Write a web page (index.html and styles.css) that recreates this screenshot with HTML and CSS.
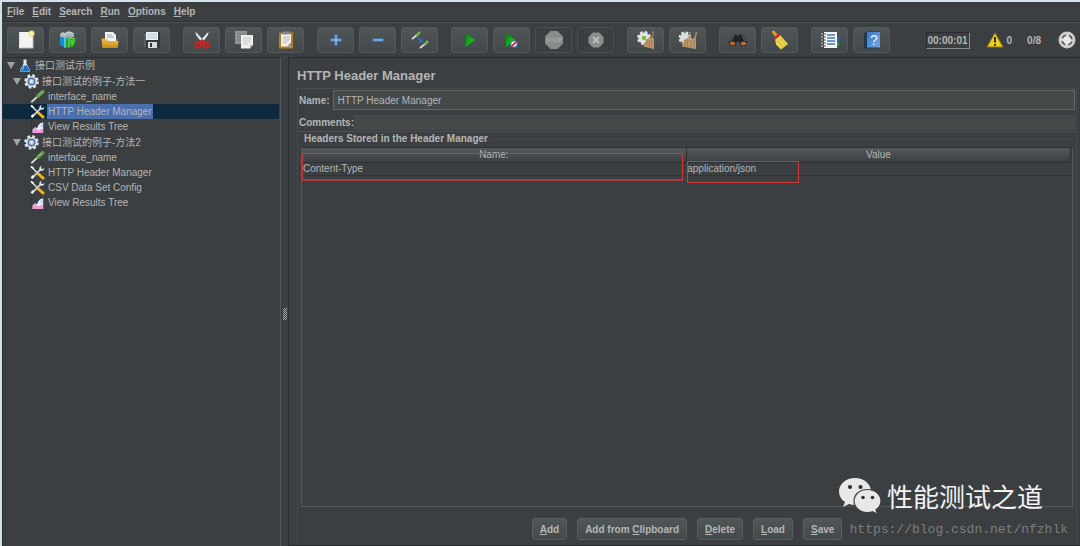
FILE: index.html
```html
<!DOCTYPE html>
<html lang="zh-CN">
<head>
<meta charset="utf-8">
<title>HTTP Header Manager</title>
<link rel="stylesheet" href="styles.css">
</head>
<body>
<svg class="defs" aria-hidden="true">
  <defs>
    <linearGradient id="g-green" x1="0" y1="0" x2="1" y2="1"><stop offset="0" stop-color="#0b7a10"/><stop offset=".6" stop-color="#12b81a"/><stop offset="1" stop-color="#0a8a10"/></linearGradient>
    <linearGradient id="g-gold" x1="0" y1="0" x2="0" y2="1"><stop offset="0" stop-color="#f0bd50"/><stop offset="1" stop-color="#c88a18"/></linearGradient>
    <linearGradient id="g-book" x1="0" y1="0" x2="1" y2="1"><stop offset="0" stop-color="#3b78c8"/><stop offset="1" stop-color="#6fa6e6"/></linearGradient>
    <radialGradient id="g-ball"><stop offset="0" stop-color="#ffffff"/><stop offset="1" stop-color="#c4c4c4"/></radialGradient>
  </defs>
  <symbol id="flask" viewBox="0 0 12 14"><path d="M4.500 1h3v4L11 12q.3 1.300-1 1.300H2Q.7 13.300 1 12l3.500-7z" fill="#dfe9f2"/><path d="M4 7h4l2.500 5q.3 1-.7 1H2.200q-1 0-.7-1z" fill="#1d6fc4"/><path d="M5 7.500L3.500 11.500" stroke="#8cc3f4" stroke-width="1"/></symbol>
  <symbol id="gear" viewBox="0 0 16 16"><circle cx="8" cy="8" r="6.500" fill="none" stroke="#e6e9ec" stroke-width="2.600" stroke-dasharray="2.800 2.305"/><circle cx="8" cy="8" r="6" fill="#dfe3e8"/><circle cx="8" cy="8" r="4.200" fill="#46678f"/><circle cx="8" cy="8" r="3" fill="#9dbadb"/><circle cx="8" cy="8" r="1.500" fill="#e8eff7"/></symbol>
  <symbol id="dropper" viewBox="0 0 16 14"><path d="M1.500 13L9 6" stroke="#ececec" stroke-width="2"/><path d="M2 13.400L9.600 6.600" stroke="#8d8d8d" stroke-width=".7"/><path d="M8.500 6.500L13.500 2" stroke="#5f9a48" stroke-width="4" stroke-linecap="round"/><path d="M9 5.500L13 2" stroke="#a5cf8e" stroke-width="1"/></symbol>
  <symbol id="tools" viewBox="0 0 16 15"><path d="M2 2l6 6" stroke="#e2e2e2" stroke-width="1.600"/><path d="M1 1l2.500 2" stroke="#f2f2f2" stroke-width="2"/><path d="M8.500 8.500L14 13.500" stroke="#f0b41c" stroke-width="3" stroke-linecap="round"/><path d="M2 13.500L11 4.500" stroke="#c8ccd0" stroke-width="2"/><path d="M1.500 13.500L4 11" stroke="#f5f5f5" stroke-width="2.400"/><path d="M11.500 .8q-2.500 1.700-1 4.200 2.600 1.800 4.500-.7l.2-1.500-2 1.200-1.700-1.200 1-2.200z" fill="#e4e7ea"/></symbol>
  <symbol id="chart" viewBox="0 0 16 15"><path d="M1.500 0v14" stroke="#2c3033" stroke-width="1" stroke-dasharray="2 1"/><path d="M7 14q0-10 7-11v11z" fill="#e4efff"/><path d="M10.500 8q1-3 3.500-4v4z" fill="#b9d3f4"/><path d="M2.500 14.500v-3L5.500 8.500l3 2.500L14 9v5.500z" fill="#ee9ad8"/><path d="M2.500 11.500l3-3 3 2.500L14 9" stroke="#fff" stroke-width=".8" fill="none"/></symbol>
  <symbol id="i-new" viewBox="0 0 20 20"><path d="M3 2h14v16H3z" fill="#f3f3f1"/><path d="M3 18h14M17 4v14" stroke="#c4c4c0"/><path d="M3 4h1M3 7h1M3 10h1M3 13h1" stroke="#aaa"/><circle cx="15.500" cy="3.500" r="3" fill="#efe27a"/><circle cx="15.500" cy="3.500" r="1.300" fill="#fffbd0"/></symbol>
  <symbol id="i-templates" viewBox="0 0 20 20"><path d="M2 4l3-2 3 1 3-2 5 2v4l-6 2-8-2z" fill="#a9b4b6"/><path d="M3 3l4 2 2-3 5 1" stroke="#d7dfe0" fill="none"/><path d="M2 7l4 1v9l-4-2z" fill="#168cc6"/><path d="M6 8l4-2v11l-4 1z" fill="#4fc0ee"/><path d="M8 9l3-2 7 2-2 7-5 2-3-1z" fill="#20a51d"/><path d="M11 8v9M11 8l6 1" stroke="#82e276" fill="none"/><path d="M12 10l5 .5-3 6z" fill="#4fd13e"/></symbol>
  <symbol id="i-open" viewBox="0 0 20 20"><path d="M2 8h5l1 1h10v8H2z" fill="#a9700f"/><path d="M5 2h8l3 3v7H5z" fill="#f2f2f2"/><path d="M7 5h5M7 7h7" stroke="#a6a6a6"/><path d="M1.500 9h5l1.500 2h10.500l-1 7h-15z" fill="url(#g-gold)"/></symbol>
  <symbol id="i-save" viewBox="0 0 20 20"><path d="M2 2h16v16H4l-2-2z" fill="#343a40"/><path d="M4 2h12v8H4z" fill="#edf3f7"/><path d="M5 4h10M5 6h10M5 8h10" stroke="#b5c9d8"/><path d="M6 12h9v6H6z" fill="#dcdcdc"/><path d="M8 13h2v4H8z" fill="#333"/><path d="M3 3v14" stroke="#7a838c"/></symbol>
  <symbol id="i-cut" viewBox="0 0 20 20"><path d="M3.500 1.500L12 11l-2 2L4 5zM16.500 1.500L8 11l2 2L16 5z" fill="#e6e9e9"/><path d="M6 13l4-2 4 2" stroke="#e01a1a" stroke-width="2.400" fill="none"/><circle cx="6" cy="15" r="2.500" fill="none" stroke="#e01a1a" stroke-width="2"/><circle cx="14" cy="15" r="2.500" fill="none" stroke="#e01a1a" stroke-width="2"/></symbol>
  <symbol id="i-copy" viewBox="0 0 20 20"><path d="M1 1h12v13H1z" fill="#8f9595"/><path d="M3 4h8M3 7h5M3 10h4" stroke="#757b7b"/><path d="M7 5h12v10l-3 3.500H7z" fill="#efefee"/><path d="M9 8h8M9 10h8M9 12h8M9 14h5" stroke="#c9c9c9"/><path d="M16 18.500V15h3z" fill="#a6a6a6"/></symbol>
  <symbol id="i-paste" viewBox="0 0 20 20"><path d="M3 2.500h14v16H3z" fill="#bd7b18"/><path d="M5 4h10v12.500H5z" fill="#f3f3f1"/><path d="M6 1.500h8v3H6z" fill="#858a8c"/><path d="M7 7h7M7 9h7M7 11h6M7 13h4" stroke="#b8b8b8"/><path d="M11 16.500L15 12v4.500z" fill="#9b9b9b"/></symbol>
  <symbol id="i-plus" viewBox="0 0 20 20"><path d="M10 4.500v11M4.500 10h11" stroke="#4a83cc" stroke-width="3"/><path d="M10 5v10M5 10h10" stroke="#9cc5f3"/></symbol>
  <symbol id="i-minus" viewBox="0 0 20 20"><path d="M4.500 10h11" stroke="#4a83cc" stroke-width="3"/><path d="M5 10h10" stroke="#9cc5f3"/></symbol>
  <symbol id="i-toggle" viewBox="0 0 20 20"><path d="M2 9l5-4M10 18l5-4" stroke="#dadada" stroke-width="1.700"/><path d="M6.500 5.500L10 2M14.500 14.500L18 11" stroke="#72b052" stroke-width="2.600"/><path d="M7.500 7.500l4 3.500" stroke="#2d73e0" stroke-width="1.600"/><path d="M12.500 8.500v4H8.500z" fill="#2d73e0"/></symbol>
  <symbol id="i-play" viewBox="0 0 20 20"><path d="M5.500 3l9.500 7-9.500 7z" fill="url(#g-green)"/></symbol>
  <symbol id="i-playnow" viewBox="0 0 20 20"><path d="M4 3l9 7-9 7z" fill="url(#g-green)"/><circle cx="12" cy="14" r="3.300" fill="#e8eefa" stroke="#3b6fc0"/><path d="M9.800 16.200l4.400-4.400" stroke="#d83030" stroke-width="1.800"/></symbol>
  <symbol id="i-shutdown" viewBox="0 0 20 20"><path d="M7 2.500h6L17.500 7v6L13 17.500H7L2.500 13V7z" fill="#8b8c8c"/><path d="M7 7l6 6M13 7l-6 6" stroke="#bbbcbc" stroke-width="2"/></symbol>
  <symbol id="i-clear" viewBox="0 0 20 20"><circle cx="8" cy="8" r="5.500" fill="none" stroke="#e3e5e5" stroke-width="3" stroke-dasharray="2.500 1.820"/><circle cx="8" cy="8" r="5.500" fill="#e3e5e5"/><circle cx="8" cy="8" r="2.200" fill="#79bd35"/><path d="M17.500 1l-1.500 8" stroke="#a1764a" stroke-width="1.500"/><path d="M10 9.500l4-2 4 1V19L7.500 16.500z" fill="#c0976a"/><path d="M12 10l-2 6M14 10l-1 7M16 10v8" stroke="#987046" stroke-width=".7"/></symbol>
  <symbol id="i-clearall" viewBox="0 0 20 20"><circle cx="7" cy="8" r="5" fill="none" stroke="#e3e5e5" stroke-width="3" stroke-dasharray="2.300 1.630"/><circle cx="7" cy="8" r="5" fill="#d8dddd"/><path d="M12 2l-1 8M18.500 2l-2 8" stroke="#b08a5e" stroke-width="1.500"/><path d="M6 10l4-2.500 3 2 4-2 1 2V19L4 16.500z" fill="#c0976a"/><path d="M8 10l-2 6M10 10l-1 7M13 10v8M16 10v8" stroke="#987046" stroke-width=".7"/></symbol>
  <symbol id="i-find" viewBox="0 0 20 20"><path d="M5 4.500h3.500l1.500 2 1.500-2H15l4 8-1 3.500h-5l-2-4.500H9L7 16H2l-1-3.500z" fill="#202325"/><path d="M6 5L3 11M14 5l3 6" stroke="#6a7175"/><ellipse cx="4.500" cy="13.500" rx="2.700" ry="2" fill="#b66b35"/><ellipse cx="15.500" cy="13.500" rx="2.700" ry="2" fill="#b66b35"/></symbol>
  <symbol id="i-broom" viewBox="0 0 20 20"><path d="M3.500 2l3.500 4.500" stroke="#d99d35" stroke-width="3" stroke-linecap="round"/><path d="M5 9l5-4 8 9-7 5.500-5-5z" fill="#ead64e"/><path d="M4.500 8.500l5-4" stroke="#cf2a20" stroke-width="2.500"/><path d="M8 10l5 7M10 8l6 7" stroke="#c9b030" stroke-width=".8"/></symbol>
  <symbol id="i-list" viewBox="0 0 20 20"><path d="M4 2h13v16H4z" fill="#f6f6f6"/><path d="M17 7h2v4h-2z" fill="#2760c9"/><path d="M17 12h2v4h-2z" fill="#2e9e30"/><path d="M7 5h8M7 8h8M7 11h8M7 14h8" stroke="#4377c6" stroke-width="1.300"/><path d="M2 4h4M2 7h4M2 10h4M2 13h4M2 16h4" stroke="#484848"/><path d="M1 4h2M1 7h2M1 10h2M1 13h2M1 16h2" stroke="#d8d8d8"/></symbol>
  <symbol id="i-warn" viewBox="0 0 18 16"><path d="M9 1l8 14H1z" fill="#f3cd16" stroke="#8e7a18"/><path d="M9 5v5.500M9 12v1.800" stroke="#1c1c10" stroke-width="1.800"/></symbol>
  <symbol id="i-ball" viewBox="0 0 18 18"><circle cx="9" cy="9" r="8.500" fill="url(#g-ball)"/><circle cx="9" cy="9" r="5" fill="none" stroke="#5b5e60" stroke-width="1.800" stroke-dasharray="4.850 3" stroke-dashoffset="-1.500"/><path d="M9 6v6M6 9h6" stroke="#e6e6e6" stroke-width="2"/></symbol>
</svg>

<div class="app">
  <nav class="menubar" aria-label="Main menu">
    <button class="menu"><u>F</u>ile</button>
    <button class="menu"><u>E</u>dit</button>
    <button class="menu"><u>S</u>earch</button>
    <button class="menu"><u>R</u>un</button>
    <button class="menu"><u>O</u>ptions</button>
    <button class="menu"><u>H</u>elp</button>
  </nav>

  <header class="toolbar">
    <div class="tool-group">
      <button class="tool" aria-label="New"><svg><use href="#i-new"/></svg></button>
      <button class="tool" aria-label="Templates"><svg><use href="#i-templates"/></svg></button>
      <button class="tool" aria-label="Open"><svg><use href="#i-open"/></svg></button>
      <button class="tool" aria-label="Save"><svg><use href="#i-save"/></svg></button>
    </div>
    <div class="tool-group">
      <button class="tool" aria-label="Cut"><svg><use href="#i-cut"/></svg></button>
      <button class="tool" aria-label="Copy"><svg><use href="#i-copy"/></svg></button>
      <button class="tool" aria-label="Paste"><svg><use href="#i-paste"/></svg></button>
    </div>
    <div class="tool-group">
      <button class="tool" aria-label="Expand all"><svg><use href="#i-plus"/></svg></button>
      <button class="tool" aria-label="Collapse all"><svg><use href="#i-minus"/></svg></button>
      <button class="tool" aria-label="Toggle"><svg><use href="#i-toggle"/></svg></button>
    </div>
    <div class="tool-group">
      <button class="tool" aria-label="Start"><svg><use href="#i-play"/></svg></button>
      <button class="tool" aria-label="Start no pauses"><svg><use href="#i-playnow"/></svg></button>
      <button class="tool" aria-label="Stop" disabled><svg viewBox="0 0 20 20"><path d="M6.500 1h7L19 6.500v7L13.500 19h-7L1 13.500v-7z" fill="#8a8b8b"/><text class="stop-text" x="10" y="12">STOP</text></svg></button>
      <button class="tool" aria-label="Shutdown" disabled><svg><use href="#i-shutdown"/></svg></button>
    </div>
    <div class="tool-group">
      <button class="tool" aria-label="Clear"><svg><use href="#i-clear"/></svg></button>
      <button class="tool" aria-label="Clear all"><svg><use href="#i-clearall"/></svg></button>
    </div>
    <div class="tool-group">
      <button class="tool" aria-label="Search"><svg><use href="#i-find"/></svg></button>
      <button class="tool" aria-label="Reset search"><svg><use href="#i-broom"/></svg></button>
    </div>
    <div class="tool-group">
      <button class="tool" aria-label="Function helper"><svg><use href="#i-list"/></svg></button>
      <button class="tool" aria-label="Help"><svg viewBox="0 0 20 20"><path d="M2 3l3-1.500h12V17L15 18.500H2z" fill="#21364f"/><path d="M5 2h13v15.500H5z" fill="url(#g-book)"/><text class="help-text" x="12" y="15">?</text></svg></button>
    </div>
    <div class="status">
      <span class="timer">00:00:01</span>
      <span class="warnings"><svg class="warn"><use href="#i-warn"/></svg>0</span>
      <span class="threads">0/8</span>
      <svg class="ball"><use href="#i-ball"/></svg>
    </div>
  </header>

  <div class="workspace">
    <aside class="tree-pane">
      <ul class="tree">
        <li>
          <div class="node root"><span class="arrow"></span><svg class="flask"><use href="#flask"/></svg><span class="label">接口测试示例</span></div>
          <ul class="tree">
            <li class="branch">
              <div class="node group"><span class="arrow"></span><svg><use href="#gear"/></svg><span class="label">接口测试的例子-方法一</span></div>
              <ul class="tree">
                <li class="node leaf"><svg><use href="#dropper"/></svg><span class="label">interface_name</span></li>
                <li class="node leaf selected"><svg><use href="#tools"/></svg><span class="label">HTTP Header Manager</span></li>
                <li class="node leaf"><svg><use href="#chart"/></svg><span class="label">View Results Tree</span></li>
              </ul>
            </li>
            <li class="branch">
              <div class="node group"><span class="arrow"></span><svg><use href="#gear"/></svg><span class="label">接口测试的例子-方法2</span></div>
              <ul class="tree">
                <li class="node leaf"><svg><use href="#dropper"/></svg><span class="label">interface_name</span></li>
                <li class="node leaf"><svg><use href="#tools"/></svg><span class="label">HTTP Header Manager</span></li>
                <li class="node leaf"><svg><use href="#tools"/></svg><span class="label">CSV Data Set Config</span></li>
                <li class="node leaf"><svg><use href="#chart"/></svg><span class="label">View Results Tree</span></li>
              </ul>
            </li>
          </ul>
        </li>
      </ul>
    </aside>
    <div class="divider"><span class="grip"></span></div>
    <main class="editor">
      <h1 class="title">HTTP Header Manager</h1>
      <div class="fields">
        <div class="field name-field"><label for="name">Name:</label><input id="name" type="text" value="HTTP Header Manager"></div>
        <div class="field comment-field"><label for="comments">Comments:</label><input id="comments" type="text"></div>
      </div>
      <section class="stored">
        <h2 class="legend">Headers Stored in the Header Manager</h2>
        <div class="table-wrap">
          <table class="headers">
            <thead><tr><th>Name:</th><th>Value</th></tr></thead>
            <tbody><tr><td>Content-Type</td><td>application/json</td></tr></tbody>
          </table>
          <span class="mark mark-name"></span>
          <span class="mark mark-value"></span>
        </div>
        <div class="actions">
          <button class="action"><u>A</u>dd</button>
          <button class="action">Add from <u>C</u>lipboard</button>
          <button class="action"><u>D</u>elete</button>
          <button class="action"><u>L</u>oad</button>
          <button class="action"><u>S</u>ave</button>
        </div>
      </section>
    </main>
  </div>

  <div class="watermark">
    <svg class="wechat" viewBox="0 0 44 38"><path d="M17 1C8 1 1 7 1 14.500c0 4.500 2.300 8 6 10.500l-2 5 6-3q3 1 6 1c9 0 16-6 16-13.500S26 1 17 1z" fill="#e8e8e8"/><path d="M29.500 12.500c-7.500 0-13.500 5-13.500 11.500s6 11.500 13.500 11.500q2.500 0 5-.8l5 2.500-1.500-4.500c3-2 5-5 5-8.700 0-6.500-6-11.500-13.500-11.500z" fill="#e8e8e8" stroke="#3b3e40" stroke-width="1.200"/><g fill="#2f3234"><circle cx="12" cy="10" r="2.100"/><circle cx="22.500" cy="10" r="2.100"/><circle cx="25" cy="20.500" r="1.800"/><circle cx="34.500" cy="20.500" r="1.800"/></g></svg>
    <span class="brand">性能测试之道</span>
  </div>
  <div class="source">https://blog.csdn.net/nfzhlk</div>
</div>
</body>
</html>
```
FILE: styles.css
```css
* { box-sizing: border-box; }

body {
  margin: 0;
  background: #3c3f41;
  color: #b4b5b5;
  font: 10px/15px "Liberation Sans", "Noto Sans CJK SC", sans-serif;
}

button, input { font: inherit; color: inherit; }
ul { list-style: none; margin: 0; padding: 0; }
.defs { position: absolute; width: 0; height: 0; }

.app {
  position: relative;
  display: flex;
  flex-direction: column;
  min-height: 100vh;
  border: solid #d3e2ee;
  border-width: 2px 0 0 2px;
}

/* Menu bar */
.menubar {
  display: flex;
  gap: 8px;
  height: 20px;
  padding: 0 5px;
  border-bottom: 1px solid #2d3032;
}
.menu {
  padding: 0;
  border: 0;
  background: none;
  font-weight: bold;
}

/* Toolbar */
.toolbar {
  display: flex;
  align-items: center;
  gap: 13px;
  height: 35px;
  padding: 0 4px 0 5px;
  border-top: 1px solid #4c4f51;
}
.tool-group { display: flex; gap: 5px; }
.tool {
  display: flex;
  align-items: center;
  justify-content: center;
  width: 37px;
  height: 26px;
  padding: 0;
  border: 1px solid #55595b;
  border-radius: 3px;
  background: linear-gradient(#505658, #434a4c);
}
.tool:disabled { background: none; border-color: #4b4e50; }
.tool svg { width: 20px; height: 20px; }
.stop-text { font-size: 6px; font-weight: bold; text-anchor: middle; fill: #a8a9a9; }
.help-text { font-size: 14px; text-anchor: middle; fill: #edf4fc; }
.status {
  display: flex;
  align-items: center;
  margin-left: auto;
  font-weight: bold;
}
.timer {
  padding: 0 1px;
  border: 1px solid;
  border-color: #292c2e #8a8d8f #8a8d8f #292c2e;
}
.warnings { display: flex; align-items: center; gap: 3px; margin-left: 16px; }
.warn { width: 18px; height: 16px; }
.threads { margin: 0 17px 0 15px; }
.ball { width: 18px; height: 18px; }

/* Workspace */
.workspace { display: flex; flex: 1; }
.tree-pane {
  width: 279px;
  padding-right: 1px;
  border: solid #2b2e30;
  border-width: 1px 0 0 1px;
  border-right: 1px solid #55585a;
}
.node {
  display: flex;
  align-items: center;
  gap: 3px;
  height: 15px;
}
.node svg { flex: none; width: 15px; height: 15px; }
.node .flask { width: 12px; margin-right: 1px; }
.root { padding-left: 4px; }
.group { padding-left: 10px; }
.leaf { padding-left: 27px; }
.branch { padding-top: 1px; }
.arrow {
  border: 4px solid transparent;
  border-top: 7px solid #a0a3a4;
  border-bottom: 0;
}
.root .arrow { margin-right: 1px; }
.label { white-space: nowrap; }
.selected { background: #0d293e; }
.selected .label { margin-left: -1px; padding: 0 1px; background: #4b6eaf; }

.divider {
  display: flex;
  align-items: center;
  justify-content: center;
  width: 7px;
}
.grip {
  width: 4px;
  height: 12px;
  margin-top: 24px;
  background: repeating-conic-gradient(#a5a8aa 0 25%, #3c3f41 0 50%) 0 0 / 2px 2px;
}

/* Editor */
.editor {
  flex: 1;
  display: flex;
  flex-direction: column;
  min-width: 0;
  padding: 8px 3px 1px 8px;
  border: solid #292c2e;
  border-width: 1px 0 1px 1px;
}
.title { margin: 0 0 2px; font-size: 13px; line-height: 20px; }
.fields {
  display: flex;
  flex-direction: column;
  gap: 5px;
  padding: 1px;
  border: 1px solid #4b4e50;
}
.field { display: flex; align-items: center; font-weight: bold; }
.field input {
  flex: 1;
  min-width: 0;
  border: 0;
  padding: 0 4px;
  background: #45494a;
  outline: 0;
}
.name-field { gap: 3px; }
.name-field input { height: 20px; border: 1px solid #646667; font-weight: normal; }
.comment-field input { height: 15px; }

.stored {
  flex: 1;
  display: flex;
  flex-direction: column;
  margin-top: 2px;
  padding: 0 3px;
  border: solid #484b4d;
  border-width: 0 1px;
}
.legend {
  display: flex;
  align-items: center;
  gap: 2px;
  margin: 0 0 0 3px;
  font-size: 10px;
  line-height: 10px;
  white-space: nowrap;
}
.legend::after { content: ""; flex: 1; height: 1px; background: #484b4d; }
.table-wrap {
  position: relative;
  flex: 1;
  margin-top: 3px;
  padding-right: 1px;
  border: 1px solid #55585a;
  border-top-color: #2f3234;
}
.headers {
  width: 100%;
  border-collapse: collapse;
  table-layout: fixed;
}
.headers th {
  height: 14px;
  padding: 0;
  border-right: 1px solid #2f3234;
  border-bottom: 1px solid #2f3234;
  background: linear-gradient(#54585b, #3c3f41);
  font-weight: normal;
  line-height: 13px;
}
.headers td {
  height: 13px;
  padding: 0 1px;
  border-bottom: 1px solid #323537;
  line-height: 12px;
}
.mark { position: absolute; border: 1px solid #d23a3a; }
.mark-name {
  left: 0;
  top: 5px;
  width: calc(50% - 4px);
  height: 28px;
  border-bottom: 2px solid #a83a3b;
}
.mark-value { left: 50%; top: 13px; width: 112px; height: 22px; }

.actions {
  display: flex;
  justify-content: center;
  gap: 10px;
  padding: 11px 0 4px;
}
.action {
  height: 22px;
  padding: 0 7px;
  border: 1px solid #5a5e60;
  border-radius: 3px;
  background: linear-gradient(#505658, #434a4c);
  font-weight: bold;
}

/* Watermark */
.watermark {
  position: absolute;
  right: 37px;
  bottom: 31px;
  display: flex;
  align-items: center;
  gap: 5px;
  color: #f2f2f2;
  font: 26px/38px "Noto Sans CJK SC", sans-serif;
}
.wechat { width: 44px; height: 38px; }
.source {
  position: absolute;
  right: 12px;
  bottom: 7px;
  color: #7b7d7e;
  font: 13px/18px "Liberation Mono", monospace;
}
```
